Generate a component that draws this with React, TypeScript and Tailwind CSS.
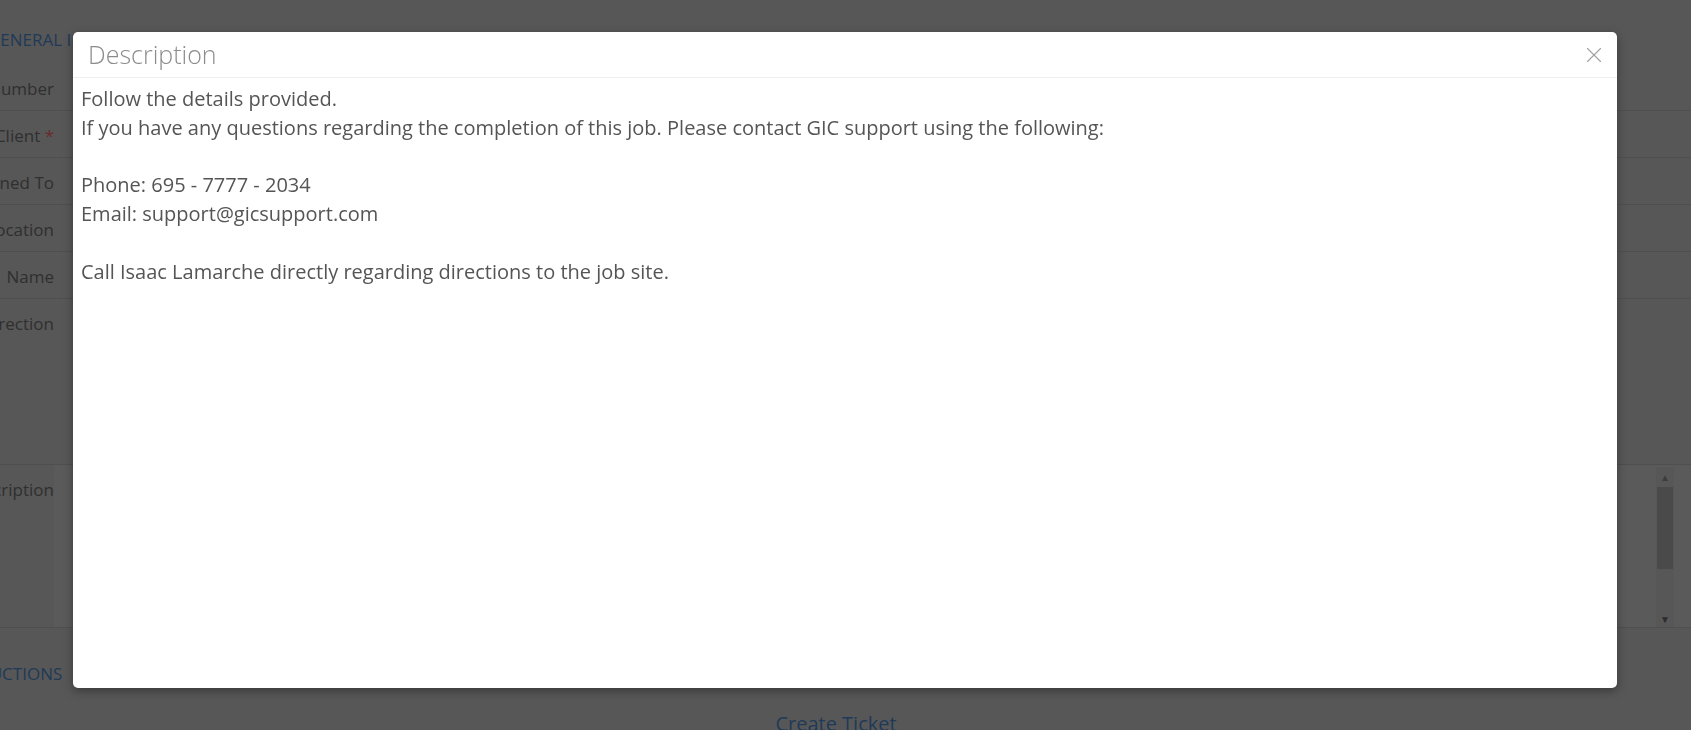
import { X } from 'lucide-react';

const ROWS: { label: string; h: string; req?: boolean }[] = [
  { label: 'Ticket Number', h: 'h-[47px]' },
  { label: 'Client', h: 'h-[47px]', req: true },
  { label: 'Assigned To', h: 'h-[47px]' },
  { label: 'Location', h: 'h-[47px]' },
  { label: 'Site  Name', h: 'h-[47px]' },
  { label: 'Direction', h: 'h-[166px]' },
  { label: 'Description', h: 'h-[163px]' },
];

const LINES = [
  'Follow the details provided.',
  'If you have any questions regarding the completion of this job. Please contact GIC support using the following:',
  '',
  'Phone: 695 - 7777 - 2034',
  'Email: support@gicsupport.com',
  '',
  'Call Isaac Lamarche directly regarding directions to the job site.',
];

function BackgroundForm() {
  return (
    <div className="w-[1691px] h-[730px] overflow-hidden bg-[#575757] font-['Open_Sans',sans-serif]">
      <div className="pt-[27px] pl-0">
        <div className="-ml-[12px] text-[17px] text-[#1f3a57] h-[23px] whitespace-nowrap">GENERAL INFO</div>
        <div className="mt-[14px]">
          {ROWS.map((r) => (
            <div key={r.label} className={`flex border-b border-[#4f4f4f] ${r.h}`}>
              <div className="w-[54px] shrink-0 overflow-hidden flex justify-end pt-[12px]">
                <span className="whitespace-pre text-[17px] text-[#2f2f2f]">
                  {r.label}
                  {r.req && <span className="text-[#6b2a2a]"> *</span>}
                </span>
              </div>
              <div className={`flex-1 flex justify-end pr-[17px] ${r.label === 'Description' ? 'bg-[#5a5a5a]' : ''}`}>
                {r.label === 'Description' && (
                  <div className="w-[18px] h-[160px] mt-[2px] flex flex-col items-center bg-[#575757]">
                    <span className="h-[20px] text-[10px] leading-[20px] text-[#3c3c3c]">▲</span>
                    <div className="w-[16px] h-[82px] bg-[#4a4a4a]" />
                    <div className="flex-1" />
                    <span className="h-[16px] text-[10px] leading-[16px] text-[#2c2c2c]">▼</span>
                  </div>
                )}
              </div>
            </div>
          ))}
        </div>
        <div className="-ml-[57px] mt-[33px] text-[17px] text-[#1f3a57] h-[23px] whitespace-nowrap">INSTRUCTIONS</div>
        <div className="mt-[25px] flex justify-center pr-[19px]">
          <span className="text-[20px] text-[#1f3a57]">Create Ticket</span>
        </div>
      </div>
    </div>
  );
}

function DescriptionModal() {
  return (
    <div className="fixed left-[73px] top-[32px] w-[1544px] h-[656px] bg-white rounded-[5px] shadow-[0_3px_10px_rgba(0,0,0,0.35)] flex flex-col font-['Open_Sans',sans-serif]">
      <div className="h-[46px] shrink-0 flex items-center justify-between pl-[15px] pr-[10px] border-b border-[#efefef]">
        <h3 className="text-[25px] font-light text-[#8c8c8c] leading-none">Description</h3>
        <X className="w-[26px] h-[26px] text-[#a0a0a0]" strokeWidth={1} />
      </div>
      <div className="flex-1 pl-[8px] pt-[7px] text-[20px] leading-[28.8px] text-[#555555]">
        {LINES.map((l, i) => (
          <div key={i} className="h-[28.8px] whitespace-nowrap">{l}</div>
        ))}
      </div>
    </div>
  );
}

export default function App() {
  return (
    <div className="relative">
      <BackgroundForm />
      <DescriptionModal />
    </div>
  );
}
